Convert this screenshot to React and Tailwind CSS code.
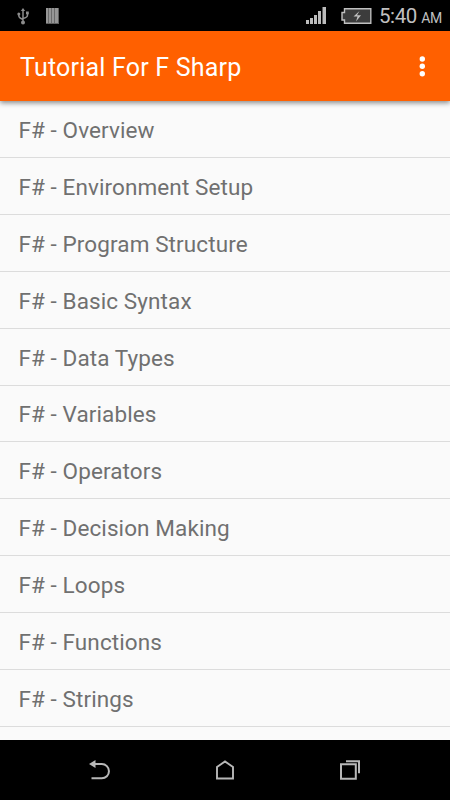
const items = [
  "Overview", "Environment Setup", "Program Structure", "Basic Syntax", "Data Types", "Variables",
  "Operators", "Decision Making", "Loops", "Functions", "Strings",
];

function StatusBar() {
  return (
    <header className="flex h-[31px] shrink-0 items-center bg-black text-[#c0c0c0]">
      <svg className="ml-[16px] h-[18px] w-[14px]" viewBox="0 0 14 18" fill="none" stroke="#8c8c8c" strokeWidth="1.500">
        <path d="M7 3v12M2.800 7v1.500Q2.800 11 7 12.500M11.500 6v2Q11.500 10.500 7 11.500" />
        <path d="M7 1l2.200 3H4.800z" fill="#8c8c8c" stroke="none" />
        <circle cx="2.800" cy="7" r="1.500" fill="#8c8c8c" stroke="none" />
        <path d="M10 4.500h2.800v2.800H10z" fill="#8c8c8c" stroke="none" />
        <circle cx="7" cy="15.500" r="2" fill="#8c8c8c" stroke="none" />
      </svg>
      <svg className="ml-[16px] h-[16px] w-[13px]" viewBox="0 0 13 16">
        <path d="M0 0h13v16H0z" fill="#606060" />
        <path d="M0 0h2.200v15H0zM3 0h2.200v15H3zM6 0h2.200v15H6zM9 0h3v15H9z" fill="#969696" />
      </svg>
      <svg className="ml-auto h-[18px] w-[20px]" viewBox="0 0 20 18" fill="#bcbcbc">
        <path d="M0 13h3v4H0zM4 11h3v6H4zM8 8h3v9H8zM12 4h3v13h-3zM16.500 0h3.500v17h-3.500z" />
      </svg>
      <svg className="ml-[15px] h-[16px] w-[31px]" viewBox="0 0 31 16">
        <path d="M4 1h25v14H4v-3H1V4h3z" fill="#3c3c3c" />
        <path d="M3.500 .8h26.300v14.400H3.500V12H1V4.500h2.500z" fill="none" stroke="#c0c0c0" strokeWidth="1.400" />
        <path d="M18.500 3L12.500 8.500h4l-1.500 5L20 7.200h-4z" fill="#c0c0c0" />
      </svg>
      <div className="ml-[7px] mr-[8px] flex w-[63px] items-baseline justify-between whitespace-nowrap">
        <span className="text-[20.5px] leading-[30px] tracking-[-0.4px]">5:40</span>
        <span className="text-[14px] tracking-[-0.3px]">AM</span>
      </div>
    </header>
  );
}

function NavigationBar() {
  return (
    <nav className="flex h-[60px] shrink-0 items-center bg-black pl-[37px]">
      <svg className="h-[60px] w-[125px]" viewBox="0 0 125 60" fill="none" stroke="#b8b8b8" strokeWidth="2">
        <path d="M54.500 38.300h10.300a7.150 7.150 0 0 0 0-14.300H56" />
        <path d="M52 24l6.500-4v8z" fill="#b8b8b8" stroke="none" />
      </svg>
      <svg className="h-[60px] w-[125px]" viewBox="0 0 125 60" fill="none" stroke="#b8b8b8" strokeWidth="1.900">
        <path d="M55 38.500V27l8-5.500 8 5.500v11.500z" />
      </svg>
      <svg className="h-[60px] w-[125px]" viewBox="0 0 125 60" fill="none" stroke="#b8b8b8" strokeWidth="2">
        <path d="M54 24.200h14.800v14.600H54zM59 21.200h13v12" />
      </svg>
    </nav>
  );
}

export default function App() {
  return (
    <div className="flex h-[800px] w-[450px] flex-col overflow-hidden bg-[#fafafa] font-['Roboto',sans-serif]">
      <StatusBar />
      <div className="z-10 flex h-[70px] shrink-0 items-center justify-between bg-[#ff6000] pl-[20px] pr-[25px] pt-[2px] text-white shadow-[0_2px_5px_rgba(0,0,0,0.45)]">
        <h1 className="pt-[2px] text-[25px] leading-[30px] tracking-[0.2px]">Tutorial For F Sharp</h1>
        <svg className="h-[22px] w-[6px]" viewBox="0 0 6 22" fill="white">
          <circle cx="3.300" cy="3" r="2.700" />
          <circle cx="3.300" cy="10.300" r="2.700" />
          <circle cx="3.300" cy="17.800" r="2.700" />
        </svg>
      </div>
      <main className="min-h-0 flex-1 overflow-hidden">
        <ul>
          {items.map((name) => (
            <li key={name} className="flex h-[56.92px] items-center border-b border-[#dcdcdc] pl-[18.4px] pt-[3.6px] text-[22.5px] tracking-[0.1px] text-[#707070]">
              <span className="whitespace-nowrap">F# - {name}</span>
            </li>
          ))}
        </ul>
      </main>
      <NavigationBar />
    </div>
  );
}
